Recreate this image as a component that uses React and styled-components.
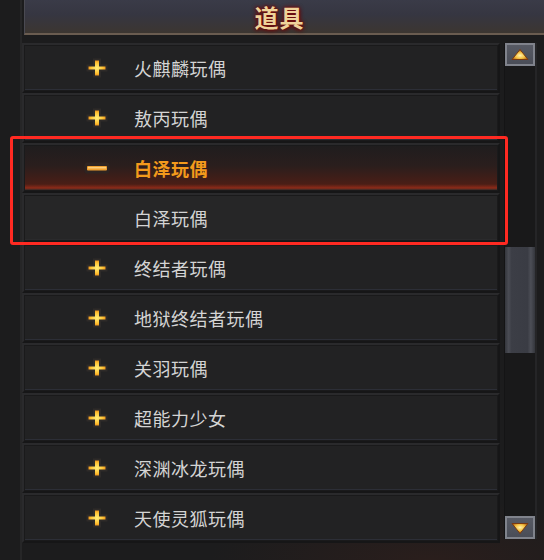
import React from "react";
import styled, { createGlobalStyle } from "styled-components";

const Global = createGlobalStyle`
  html, body { margin: 0; padding: 0; }
  body {
    width: 544px; height: 560px; overflow: hidden;
    background: #1c1c1d;
    font-family: "Noto Sans CJK SC", "Noto Sans", sans-serif;
  }
`;

const Page = styled.div`
  position: relative;
  width: 544px;
  height: 560px;
  background: radial-gradient(ellipse 220px 60px at 430px 560px, #2a1e1c 0%, rgba(28,28,29,0) 100%), #1c1c1d;
  display: flex;
  flex-direction: column;
  padding-left: 20px;
  box-sizing: border-box;
`;

const Frame = styled.div`
  flex: 1;
  display: flex;
  flex-direction: column;
  border-left: 2px solid #262627;
  padding-left: 2px;
`;

const Header = styled.div`
  height: 33px;
  border-left: 1px solid #4a4a52;
  border-bottom: 2px solid #6a5c50;
  background: linear-gradient(180deg, #3a3b48 0%, #363641 45%, #3c3631 100%);
  display: flex;
  align-items: center;
  justify-content: center;
  padding-right: 10px;
`;

const Title = styled.div`
  font-size: 24px;
  line-height: 28px;
  font-weight: 700;
  color: #efd39a;
  letter-spacing: 1px;
  text-shadow: 0 0 2px #6a0a0a, 0 0 4px #7a1010, 0 1px 5px #5a0000;
`;

const Body = styled.div`
  display: flex;
  margin-top: 8px;
  gap: 4px;
`;

const List = styled.div`
  width: 478px;
  display: flex;
  flex-direction: column;
  margin-left: -2px;
`;

const Row = styled.div`
  height: 50px;
  box-sizing: border-box;
  border: 2px solid #161617;
  border-top-color: #2a2a2c;
  border-left-color: #2a2a2c;
  background: ${(p) =>
    p.$active
      ? "linear-gradient(180deg, #1f1d1e 0%, #2a1e1d 45%, #4a1e16 85%, #8a2a18 93%, #3a2a28 100%)"
      : p.$sub
      ? "#262627"
      : "#222223"};
  box-shadow: inset 0 0 0 1px #1a1a1b, inset 0 -2px 0 ${(p) => (p.$active ? "#4a2a24" : p.$sub ? "#2a2a2c" : "#2c2e36")};
  display: flex;
  align-items: center;
  padding-left: 56px;
`;

const IconSlot = styled.div`
  width: 34px;
  height: 20px;
  display: flex;
  align-items: center;
  justify-content: center;
  margin-right: 20px;
`;

const Label = styled.span`
  font-size: 18px;
  color: ${(p) => (p.$active ? "#f39a1c" : "#d4d4d4")};
  font-weight: ${(p) => (p.$active ? 700 : 400)};
  letter-spacing: 0.5px;
  margin-top: -1px;
`;

const Scroll = styled.div`
  width: 33px;
  height: 496px;
  background: #19191a;
  border-left: 1px solid #141415;
  border-right: 2px solid #252527;
  display: flex;
  flex-direction: column;
  box-sizing: border-box;
`;

const Arrow = styled.div`
  height: 23px;
  box-sizing: border-box;
  border: 2px solid #80838c;
  background: linear-gradient(180deg, #575a64, #4a4d57);
  display: flex;
  align-items: center;
  justify-content: center;
`;

const Track = styled.div`
  flex: 1;
  display: flex;
  flex-direction: column;
  padding: 0 2px;
`;

const Thumb = styled.div`
  margin-top: 181px;
  height: 106px;
  margin-left: -2px;
  margin-right: -2px;
  background: linear-gradient(90deg, #34363c 0%, #4a4c54 12%, #3c3e46 22%, #3a3c44 75%, #4c4e56 86%, #34363c 100%);
`;

const Highlight = styled.div`
  position: absolute;
  left: 10px;
  top: 136px;
  width: 498px;
  height: 109px;
  box-sizing: border-box;
  border: 3px solid #ff2a22;
  border-radius: 3px;
  pointer-events: none;
`;

const Plus = () => (
  <svg width="24" height="22" viewBox="0 0 24 22">
    <defs>
      <radialGradient id="pg" cx="0.5" cy="0.5" r="0.6">
        <stop offset="0" stopColor="#fff07a" />
        <stop offset="0.6" stopColor="#ffc030" />
        <stop offset="1" stopColor="#e07810" />
      </radialGradient>
    </defs>
    <path d="M8 1.5h8v6h6.5v7h-6.5v6h-8v-6h-6.5v-7h6.5z" fill="#2e2b29" />
    <path d="M10 3.5h4v6h6.5v3h-6.5v6h-4v-6h-6.5v-3h6.5z" fill="url(#pg)" />
  </svg>
);

const Minus = () => (
  <svg width="26" height="14" viewBox="0 0 26 14">
    <rect x="0.5" y="1.5" width="25" height="11" rx="2.5" fill="#2e2422" />
    <rect x="3" y="5" width="20" height="4.5" rx="1" fill="#f0a030" />
    <rect x="4" y="6" width="18" height="1.5" fill="#ffd890" opacity="0.8" />
  </svg>
);

const Tri = ({ down }) => (
  <svg width="24" height="14" viewBox="0 0 24 14">
    <defs>
      <radialGradient id={down ? "tg2" : "tg1"} cx="0.5" cy="0.6" r="0.6">
        <stop offset="0" stopColor="#fff3b0" />
        <stop offset="0.5" stopColor="#f4c040" />
        <stop offset="1" stopColor="#a05010" />
      </radialGradient>
    </defs>
    <g transform={down ? "rotate(180 12 7)" : undefined}>
      <path d="M12 1.5 L20 11.5 H4 Z" fill={`url(#${down ? "tg2" : "tg1"})`} stroke="#7a3a10" strokeWidth="1" strokeLinejoin="round" />
    </g>
  </svg>
);

const items = [
  { t: "火麒麟玩偶" },
  { t: "敖丙玩偶" },
  { t: "白泽玩偶", active: true },
  { t: "白泽玩偶", sub: true },
  { t: "终结者玩偶" },
  { t: "地狱终结者玩偶" },
  { t: "关羽玩偶" },
  { t: "超能力少女" },
  { t: "深渊冰龙玩偶" },
  { t: "天使灵狐玩偶" },
];

export default function App() {
  return (
    <Page>
      <Global />
      <Frame>
        <Header>
          <Title>道具</Title>
        </Header>
        <Body>
          <List>
            {items.map((it, i) => (
              <Row key={i} $active={it.active} $sub={it.sub}>
                <IconSlot>{it.sub ? null : it.active ? <Minus /> : <Plus />}</IconSlot>
                <Label $active={it.active}>{it.t}</Label>
              </Row>
            ))}
          </List>
          <Scroll>
            <Arrow><Tri /></Arrow>
            <Track>
              <Thumb />
            </Track>
            <Arrow><Tri down /></Arrow>
          </Scroll>
        </Body>
      </Frame>
      <Highlight />
    </Page>
  );
}
